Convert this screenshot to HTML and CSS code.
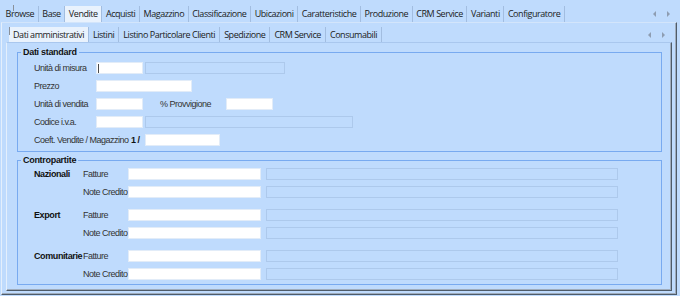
FILE: index.html
```html
<!DOCTYPE html>
<html lang="it">
<head>
  <meta charset="UTF-8" />
  <title>Articolo - Vendite</title>
  <link rel="stylesheet" href="styles.css">
</head>
<body>

<div class="window">
  <div class="tabstrip main-tabs">
    <span class="tab">Browse</span>
    <span class="tab">Base</span>
    <span class="tab active">Vendite</span>
    <span class="tab">Acquisti</span>
    <span class="tab">Magazzino</span>
    <span class="tab">Classificazione</span>
    <span class="tab">Ubicazioni</span>
    <span class="tab">Caratteristiche</span>
    <span class="tab">Produzione</span>
    <span class="tab">CRM Service</span>
    <span class="tab">Varianti</span>
    <span class="tab">Configuratore</span>
    <span class="tab-scroll">
      <svg width="18" height="6" viewBox="0 0 18 6"><polygon points="3,0 0,3 3,6"/><polygon points="14,0 17,3 14,6"/></svg>
    </span>
  </div>

  <div class="panel outer">
    <div class="tabstrip sub-tabs">
      <span class="tab active">Dati amministrativi</span>
      <span class="tab">Listini</span>
      <span class="tab">Listino Particolare Clienti</span>
      <span class="tab">Spedizione</span>
      <span class="tab">CRM Service</span>
      <span class="tab">Consumabili</span>
      <span class="tab-scroll">
        <svg width="18" height="6" viewBox="0 0 18 6"><polygon points="3,0 0,3 3,6"/><polygon points="14,0 17,3 14,6"/></svg>
      </span>
    </div>

    <div class="panel inner">
      <fieldset class="group standard">
        <legend>Dati standard</legend>
        <div class="row">
          <label class="lbl">Unità di misura</label>
          <input class="short focused" type="text">
          <input class="lookup w140" type="text" disabled>
        </div>
        <div class="row">
          <label class="lbl">Prezzo</label>
          <input class="price" type="text">
        </div>
        <div class="row">
          <label class="lbl">Unità di vendita</label>
          <input class="short" type="text">
          <label class="lbl lbl-prov">% Provvigione</label>
          <input class="short" type="text">
        </div>
        <div class="row">
          <label class="lbl">Codice i.v.a.</label>
          <input class="short" type="text">
          <input class="lookup w208" type="text" disabled>
        </div>
        <div class="row">
          <label class="coef-lbl">Coeft. Vendite / Magazzino</label>
          <span class="ratio">1 /</span>
          <input class="coef" type="text">
        </div>
      </fieldset>

      <fieldset class="group contro">
        <legend>Contropartite</legend>
        <div class="pair">
          <div class="row">
            <span class="area">Nazionali</span>
            <label class="sub">Fatture</label>
            <input class="acct" type="text">
            <input class="lookup wide" type="text" disabled>
          </div>
          <div class="row">
            <span class="area"></span>
            <label class="sub">Note Credito</label>
            <input class="acct" type="text">
            <input class="lookup wide" type="text" disabled>
          </div>
        </div>
        <div class="pair">
          <div class="row">
            <span class="area">Export</span>
            <label class="sub">Fatture</label>
            <input class="acct" type="text">
            <input class="lookup wide" type="text" disabled>
          </div>
          <div class="row">
            <span class="area"></span>
            <label class="sub">Note Credito</label>
            <input class="acct" type="text">
            <input class="lookup wide" type="text" disabled>
          </div>
        </div>
        <div class="pair">
          <div class="row">
            <span class="area">Comunitarie</span>
            <label class="sub">Fatture</label>
            <input class="acct" type="text">
            <input class="lookup wide" type="text" disabled>
          </div>
          <div class="row">
            <span class="area"></span>
            <label class="sub">Note Credito</label>
            <input class="acct" type="text">
            <input class="lookup wide" type="text" disabled>
          </div>
        </div>
      </fieldset>
    </div>
  </div>
</div>

</body>
</html>
```

FILE: styles.css
```css
html, body {
  margin: 0;
  background: #bfdbfd;
  font-family: "Liberation Sans", Arial, sans-serif;
}

.window {
  width: 680px;
  height: 296px;
  overflow: hidden;
}

/* tab strips */

.tabstrip {
  display: flex;
  font-family: "Open Sans", "Noto Sans", sans-serif;
  font-size: 9px;
  letter-spacing: -0.45px;
  color: #1b1b1b;
}

.tab {
  padding: 0 4px;
  border-right: 1px solid #a2bde0;
  white-space: nowrap;
  position: relative;
}

.tab.active {
  background: #e9f2fd;
}

.main-tabs {
  position: relative;
  height: 16px;
  margin: 6px 0 0 2px;
}

.main-tabs .tab {
  line-height: 16px;
  padding: 0 3.6px;
}

.main-tabs::before {
  content: "";
  position: absolute;
  left: 11px;
  top: -1px;
  width: 1px;
  height: 6px;
  background: #8a9099;
}

.sub-tabs {
  height: 15px;
  margin-left: 3px;
}

.sub-tabs .tab {
  line-height: 14px;
  padding-top: 1px;
}

.sub-tabs .tab.active::before {
  content: "";
  position: absolute;
  left: 0;
  top: 0;
  width: 1px;
  height: 8px;
  background: #8a9099;
}

.tab-scroll {
  margin-left: auto;
  display: flex;
  align-items: center;
}

.main-tabs .tab-scroll {
  margin-right: 9px;
}

.sub-tabs .tab-scroll {
  margin-right: 6px;
}

.tab-scroll svg {
  fill: #8e9db2;
  display: block;
}

/* panels */

.panel {
  box-sizing: border-box;
  border-left: 1px solid #e4effc;
  border-top: 1px solid #d3e5fb;
  border-right: 1px solid #4e5b69;
  border-bottom: 1px solid #4e5b69;
  box-shadow: inset -1px -1px 0 #9facbc;
}

.outer {
  width: 676px;
  margin-left: 1px;
  padding: 4px 4px 3px 4px;
}

.inner {
  padding: 0 9px 5px 10px;
  border-top-color: #a9c7ee;
}

/* group boxes */

.group {
  margin: 3px 0 0;
  padding: 5px 0 5px 0;
  min-width: 0;
  border: 1px solid #78aaf0;
  display: flex;
  flex-direction: column;
  gap: 6px;
}

.group.standard {
  margin-top: 4px;
}

.group.contro {
  padding: 3px 0 4px 0;
  gap: 11px;
}

.group legend {
  margin-left: 3px;
  padding: 0 2px;
  font-size: 9px;
  font-weight: bold;
  line-height: 10px;
  letter-spacing: -0.3px;
  color: #111;
}

.group > .row,
.pair {
  margin-left: 16px;
}

.pair {
  display: flex;
  flex-direction: column;
  gap: 6px;
}

.row {
  display: flex;
  align-items: center;
  height: 12px;
  font-size: 9px;
  line-height: 12px;
  letter-spacing: -0.5px;
  color: #333;
  white-space: nowrap;
}

.lbl {
  width: 62px;
}

.lbl-prov {
  width: 66px;
  margin-left: 17px;
}

.coef-lbl {
  width: 97px;
}

.ratio {
  width: 14px;
  font-weight: bold;
  color: #111;
}

.area {
  width: 49px;
  font-weight: bold;
  letter-spacing: -0.4px;
  color: #111;
}

.sub {
  width: 45px;
}

/* fields */

input {
  box-sizing: border-box;
  height: 12px;
  margin: 0;
  padding: 0;
  border: 1px solid #e2ecf8;
  background: #fff;
  font-size: 9px;
  outline: none;
}

input.focused {
  background: linear-gradient(#4a4a4a, #4a4a4a) no-repeat 1px 1px / 1px 9px, #fff;
}

input.lookup {
  margin-left: 2px;
  border-color: #adc9ec;
  background: transparent;
}

.contro input.lookup {
  margin-left: 5px;
}

.short { width: 47px; }
.price { width: 96px; }
.coef { width: 75px; }
.acct { width: 133px; }
.w140 { width: 140px; }
.w208 { width: 208px; }
.wide { width: 352px; }
```
